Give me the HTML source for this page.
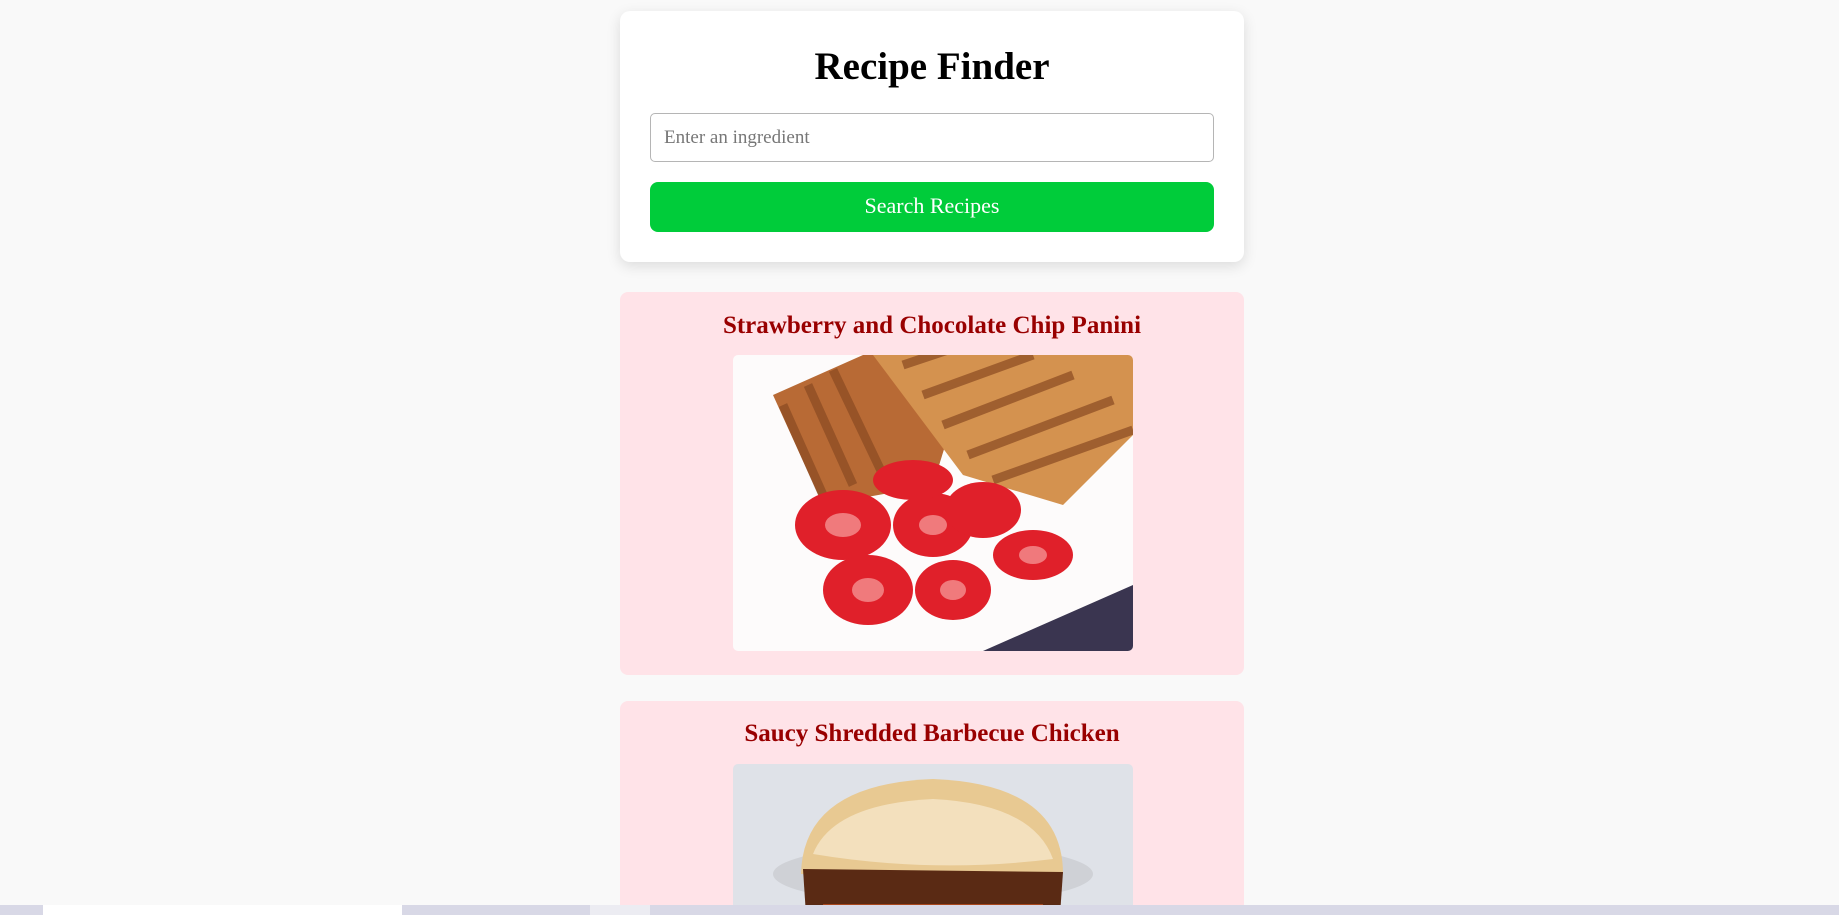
<!DOCTYPE html>
<html style="overflow:hidden;height:915px"><head><meta charset="utf-8"><style>
*{box-sizing:border-box}
html,body{margin:0;overflow:hidden}
body{background:#f9f9f9;font-family:"Liberation Serif",serif;width:1839px;height:915px;position:relative}
.main{position:absolute;left:620px;top:11px;width:624px;height:251px;background:#fff;border-radius:10px;box-shadow:0 4px 14px rgba(0,0,0,.12);padding:0 30px}
h1{margin:0;position:absolute;top:32px;left:0;width:100%;text-align:center;font-size:39px;line-height:48px}
.inp{position:absolute;left:30px;top:102px;width:564px;height:49px;border:1px solid #b5b5b5;border-radius:5px;font-size:19px;color:#777;padding:13px 13px;line-height:22px}
.btn{position:absolute;left:30px;top:171px;width:564px;height:50px;background:#00cc3a;border-radius:8px;color:#fff;font-size:22px;text-align:center;line-height:48px}
.card{position:absolute;left:620px;width:624px;background:#ffe3e8;border-radius:8px;overflow:hidden}
.card h2{margin:0;position:absolute;left:0;width:100%;text-align:center;color:#990000;font-size:25px;line-height:30px}
.img{position:absolute;left:113px;width:400px;border-radius:5px;overflow:hidden}
.task{position:absolute;left:0;top:905px;width:1839px;height:10px;background:#d8d8e6;overflow:hidden}
</style></head><body>
<div class="main">
<h1>Recipe Finder</h1>
<div class="inp">Enter an ingredient</div>
<div class="btn">Search Recipes</div>
</div>
<div class="card" style="top:292px;height:383px">
<h2 style="top:19px">Strawberry and Chocolate Chip Panini</h2>
<div class="img" style="top:63px;height:296px">
<svg width="400" height="296" viewBox="0 0 400 296" style="display:block">
<rect width="400" height="296" fill="#fdfbfb"/>
<polygon points="250,296 400,230 400,296" fill="#3a3550"/>
<polygon points="40,40 130,0 240,0 200,130 90,150" fill="#b86a35"/>
<polygon points="140,0 400,0 400,80 330,150 230,120" fill="#d4924f"/>
<g stroke="#8a4a22" stroke-width="9" opacity=".7">
<line x1="170" y1="10" x2="260" y2="-20"/><line x1="190" y1="40" x2="300" y2="0"/><line x1="210" y1="70" x2="340" y2="20"/><line x1="235" y1="100" x2="380" y2="45"/><line x1="260" y1="125" x2="400" y2="75"/>
<line x1="50" y1="50" x2="90" y2="140"/><line x1="75" y1="30" x2="120" y2="130"/><line x1="100" y1="15" x2="150" y2="120"/>
</g>
<g fill="#e0202a">
<ellipse cx="110" cy="170" rx="48" ry="35"/><ellipse cx="200" cy="170" rx="40" ry="32"/><ellipse cx="250" cy="155" rx="38" ry="28"/>
<ellipse cx="135" cy="235" rx="45" ry="35"/><ellipse cx="220" cy="235" rx="38" ry="30"/><ellipse cx="300" cy="200" rx="40" ry="25"/>
<ellipse cx="180" cy="125" rx="40" ry="20"/>
</g>
<g fill="#f7a0a0" opacity=".7">
<ellipse cx="110" cy="170" rx="18" ry="12"/><ellipse cx="200" cy="170" rx="14" ry="10"/><ellipse cx="135" cy="235" rx="16" ry="12"/><ellipse cx="220" cy="235" rx="13" ry="10"/><ellipse cx="300" cy="200" rx="14" ry="9"/>
</g>
</svg></div>
</div>
<div class="card" style="top:701px;height:214px;border-radius:8px 8px 0 0">
<h2 style="top:18px">Saucy Shredded Barbecue Chicken</h2>
<div class="img" style="top:63px;height:151px;border-radius:5px 5px 0 0">
<svg width="400" height="151" viewBox="0 0 400 151" style="display:block">
<rect width="400" height="151" fill="#dfe2e8"/>
<ellipse cx="200" cy="110" rx="160" ry="30" fill="#cfd1d6"/>
<path d="M68,110 Q70,20 200,15 Q330,20 330,110 Z" fill="#e8c992"/>
<path d="M80,90 Q100,40 200,35 Q300,40 320,95 Q200,110 80,90Z" fill="#f3e0bd"/>
<path d="M70,105 L330,108 L327,151 L73,151Z" fill="#5a2a14"/>
<path d="M90,140 L310,140 L309,151 L91,151Z" fill="#a8461c"/>
</svg></div>
</div>
<div class="task"><div style="position:absolute;left:43px;top:0;width:359px;height:10px;background:#fff"></div><div style="position:absolute;left:590px;top:0;width:60px;height:10px;background:#ececf2"></div></div>
</body></html>
